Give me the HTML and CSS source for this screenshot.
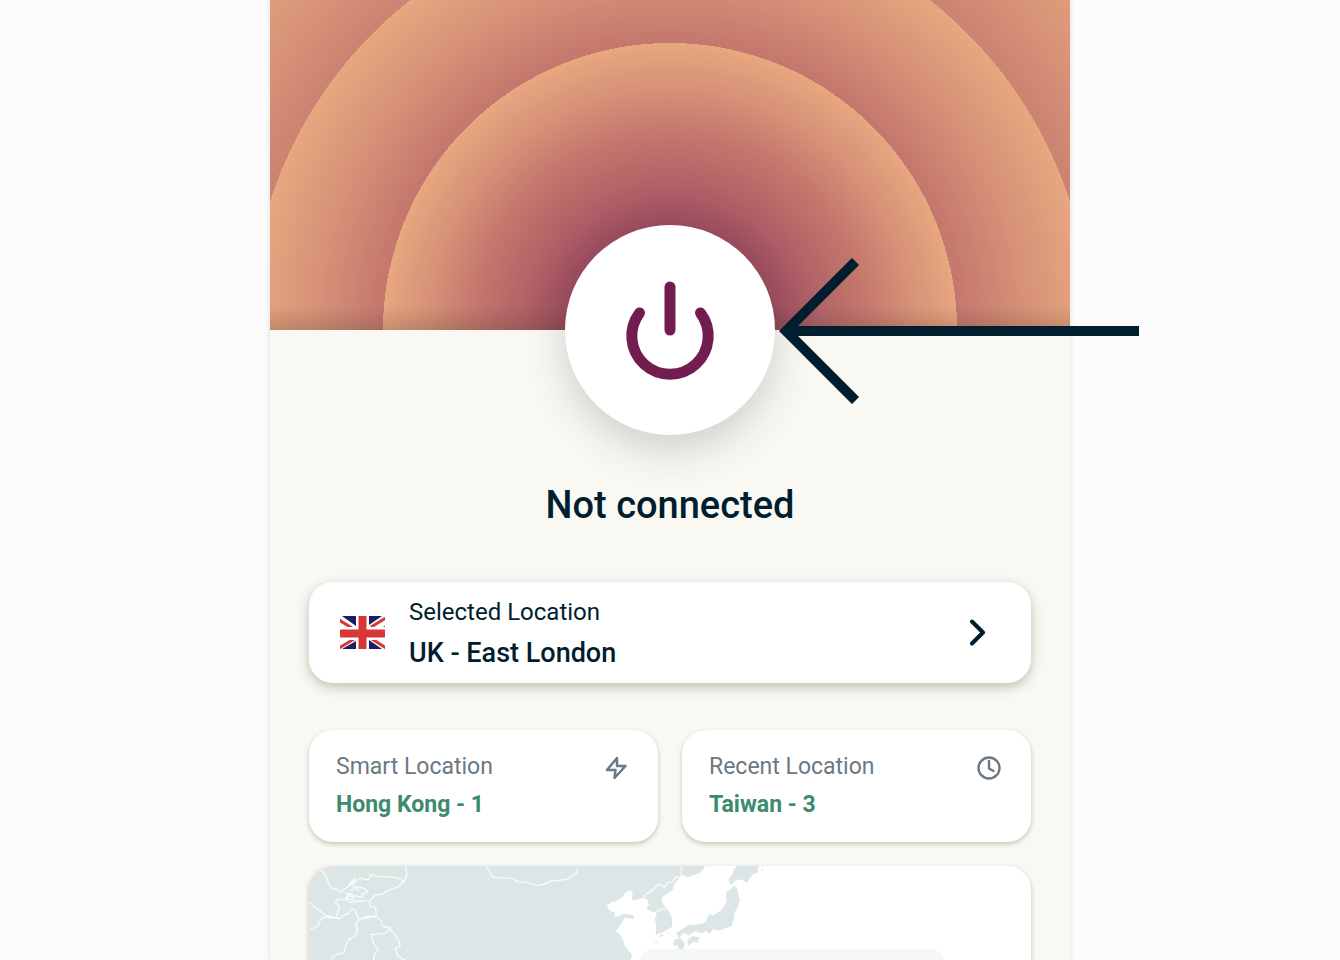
FILE: index.html
```html
<!DOCTYPE html>
<html lang="en">
<head>
  <meta charset="UTF-8" />
  <meta name="viewport" content="width=device-width, initial-scale=1.0" />
  <title>VPN</title>
  <link rel="stylesheet" href="styles.css">
</head>
<body>
  <main class="phone">
    <header class="hero">
      <button class="power" type="button" aria-label="Connect">
        <svg viewBox="0 0 100 100" fill="none" stroke="#731c50" stroke-width="11" stroke-linecap="round">
          <path d="M50 7v43" />
          <path d="M19.500 33a38.200 38.200 0 1 0 61 0" />
        </svg>
      </button>
      <svg class="arrow" viewBox="0 0 360 146" fill="none" stroke="#001e2e" stroke-width="10">
        <path d="M76.500 3.500L7 73l69.500 69.500M7 73h353" />
      </svg>
    </header>

    <h1>Not connected</h1>

    <section class="locations">
      <button class="card selected" type="button">
        <svg class="flag" viewBox="0 0 45 33">
          <path fill="#fff" d="M0 0h45v33H0z" />
          <path fill="#1b1f63" d="M2 0h14v10zM29 0h13L29 9zM2 33h14v-8zM29 33h13l-13-9zM0 3l3 3-3-1zM45 11l-4 1 4-2z" />
          <path stroke="#d93636" stroke-width="3" d="M-1 4l13 8M46 2L31 11M-1 32l15-9M46 32L32 23" />
          <path stroke="#fff" stroke-width="13" d="M22.500 0v33M0 17.500h45" />
          <path stroke="#d93636" stroke-width="8" d="M22.500 0v33M0 17.500h45" />
        </svg>
        <span class="text">
          <span class="label">Selected Location</span>
          <span class="place">UK - East London</span>
        </span>
        <svg class="chevron" viewBox="0 0 20 28" fill="none" stroke="#001e2e" stroke-width="4" stroke-linecap="round" stroke-linejoin="round">
          <path d="M5 2.500l11 11-11 11" />
        </svg>
      </button>

      <div class="shortcuts">
        <button class="card shortcut" type="button">
          <span class="text">
            <span class="label">Smart Location</span>
            <span class="place">Hong Kong - 1</span>
          </span>
          <svg class="icon" viewBox="0 0 24 24" fill="none" stroke="#6c7883" stroke-width="2.500" stroke-linejoin="round">
            <path d="M13 2L3 14h8.500l-1 8L21.500 10H13z" />
          </svg>
        </button>
        <button class="card shortcut" type="button">
          <span class="text">
            <span class="label">Recent Location</span>
            <span class="place">Taiwan - 3</span>
          </span>
          <svg class="icon" viewBox="0 0 24 24" fill="none" stroke="#6c7883" stroke-width="2.400" stroke-linecap="round" stroke-linejoin="round">
            <circle cx="12" cy="12" r="10.500" />
            <path d="M12 5v7.500l4.500 2.500" />
          </svg>
        </button>
      </div>

      <div class="card map">
        <svg viewBox="0 0 722 300">
          <!-- mainland -->
          <g transform="translate(271 -10) scale(.33333)">
            <path fill="#dde6e6" d="M-820 20H378L372 38 358 52 340 58 322 64 309 56 296 70 283 83 280 98 266 111 249 121 244 134 250 147 262 158 270 172 276 188 276 212 264 220 250 228 227 237 229 206 224 190 230 176 228 168 219 168 199 160 207 146 203 132 190 126 174 130 155 136 146 148 132 162 140 174 162 178 160 188 134 186 128 196 108 226 122 238 130 254 136 272 152 290 156 300 150 318V900H-820z" />
            <path fill="#fff" d="M158 108l-10-5-12 8-10 12-18 12-16 4-12 10 8 14 18 8-4 12 14-2 12-8 26 2 10-18 10-18-18-8z" />
            <!-- Japan -->
            <path fill="#dde6e6" d="M474 28l62 0-2 20-18 10-15 22-17-10-18 4-12 14-10-16 12-14 6-18zM454 98l8-10 8 8 10 36-6 22-10 14-2 22-8 22-18 4-18 8-18-4-12 14-10-10-12 8-20-6-20 12-14-8-16 16-8-14 36-24 38-4 14-6 12-24 12 4 22-14 10-12 8-18-2-26z" />
            <path fill="#dde6e6" d="M322 252l16-12 22 4-8 16-14-2-14 14zM278 262l8-12 14-4 8 8 8 8-6 16-16 4 2-14-12 2zM220 260l14-5-4 6zM236 240l12-6 4 4-12 6z" />
            <path fill="#dde6e6" d="M114 278l5 2-2 6-4-4zM544 38l8 2-6 6zM266 228l4 2-2 4z" />
            <path class="border" d="M304 30l0 20-5 18-10-6-14 16-12 2-8 14-20-10-12 14-26 17-7 11M228 168l14-8 16-1" />
          </g>
          <!-- land borders -->
          <g class="border" transform="translate(-8 -10) scale(.33333)">
            <path d="M556 30l8 14 12 20 58 3 16 10 26 2 38 10 38-14 46-5 20-14 12-8-4-10" />
            <path d="M60 43l14 14 8 22 10 18 16 2 10 10 10-8 14-10 10-16 12-8-12 14 8 12 24 2 16 12-18 8 4 10-24-6-20 2-10 10 18 8 24-2 10-4" />
            <path d="M142 92l20-14 14-12 26 6 10-16 20 6 54 2 24 12 8-20-4-26M310 76l-18 16-32 12-14 10-26 4-12 16-40 2-26-8-34 4-6 6 14 14-10 32-22 2-58-46" />
            <path d="M206 136l0 14 18 4 2 26-52 10-8-16-4-12-10-4-10 14-16 6-8 10-14-2-22-6-22 8-10 22-22 10" />
            <path d="M174 190l-10 14 6 18-10 20-16 8-10 18-4 22-20 4-18 12-8 14M176 188l50-6 14 12 4 16 26 6-18 16-42 4 8 28 14 16-14 20 2 18M264 216l14 16 12 14 8 22-14 10 4 20 14 10 24 12M188 182l38-2M254 214l16 2-10 8M132 126l12-10 12 10M148 104l14-8 12 8M132 112l20 2 10 14" />
          </g>
        </svg>
        <div class="map-popup"></div>
      </div>
    </section>
  </main>
</body>
</html>
```
FILE: styles.css
```css
* {
  box-sizing: border-box;
}
body {
  margin: 0;
  font-family: Roboto, "Liberation Sans", sans-serif;
  background: #fcfcfc;
  color: #001e2e;
}
button {
  border: 0;
  padding: 0;
  font: inherit;
  color: inherit;
  text-align: left;
  cursor: pointer;
}
svg {
  display: block;
  flex: none;
}
.phone {
  display: flow-root;
  max-width: 800px;
  margin: 0 auto;
  background: #f9f8f3;
  box-shadow: 0 0 6px rgba(0, 0, 0, 0.12);
}
.hero {
  position: relative;
  display: flex;
  justify-content: center;
  align-items: flex-end;
  height: 330px;
  background:
    linear-gradient(to top, rgba(60, 50, 40, 0.2), transparent 24px),
    radial-gradient(circle at 50% 100%,
      #7a2552 0, #a04f61 110px, #b06166 145px, #c4776d 196px, #d69177 241px, #e7a77f 287px,
      #c4776d 287px, #d69177 353px, #e7a77f 420px,
      #cb8372 420px, #d69177 470px, #e7a77f 560px);
}
.power {
  display: flex;
  justify-content: center;
  align-items: center;
  width: 210px;
  height: 210px;
  margin-bottom: -105px;
  border-radius: 50%;
  background: #fff;
  box-shadow: 0 14px 40px rgba(40, 45, 30, 0.2);
}
.power svg {
  width: 100px;
  height: 100px;
}
.arrow {
  position: absolute;
  left: calc(50% + 109px);
  bottom: -74px;
  width: 360px;
  height: 146px;
}
h1 {
  margin: 151px 0 53px;
  font-size: 38px;
  font-weight: 500;
  line-height: 48px;
  text-align: center;
}
.locations {
  display: flex;
  flex-direction: column;
  gap: 24px;
  height: calc(100vh - 582px);
  min-height: 320px;
  padding: 0 39px;
  /* the map runs on under the fold, shadows stay visible at the sides */
  clip-path: inset(-20px 0 0);
}
.card {
  flex: none;
  border-radius: 24px;
  background: #fff;
  box-shadow: 0 2px 5px rgba(60, 60, 40, 0.28);
}
.text {
  display: flex;
  flex-direction: column;
  flex: 1;
}
.label {
  font-size: 24px;
  line-height: 38px;
}
.selected {
  display: flex;
  align-items: center;
  gap: 24px;
  height: 101px;
  margin-bottom: 23px;
  padding: 0 44px 0 31px;
  box-shadow: 0 4px 12px rgba(60, 60, 40, 0.3);
}
.selected .text {
  padding-top: 2px;
}
.selected .place {
  font-size: 27px;
  font-weight: 500;
  line-height: 44px;
}
.flag {
  width: 45px;
  height: 33px;
}
.chevron {
  width: 20px;
  height: 28px;
}
.shortcuts {
  display: grid;
  grid-template-columns: 1fr 1fr;
  gap: 24px;
}
.shortcut {
  display: flex;
  align-items: flex-start;
  height: 112px;
  padding: 18px 30px 18px 27px;
}
.shortcut .label {
  font-size: 23px;
  color: #6c7883;
}
.shortcut .place {
  font-size: 23px;
  font-weight: 700;
  line-height: 38px;
  color: #3d8a6e;
}
.icon {
  width: 24px;
  height: 24px;
  margin-top: 8px;
}
.map {
  position: relative;
  overflow: hidden;
}
.map > svg {
  width: 100%;
}
.border {
  fill: none;
  stroke: #f7fafa;
  stroke-width: 4;
  stroke-linejoin: round;
}
.map-popup {
  position: absolute;
  top: 83px;
  left: 330px;
  width: 305px;
  height: 90px;
  border-radius: 14px;
  background: #f6f7f9;
}
```
